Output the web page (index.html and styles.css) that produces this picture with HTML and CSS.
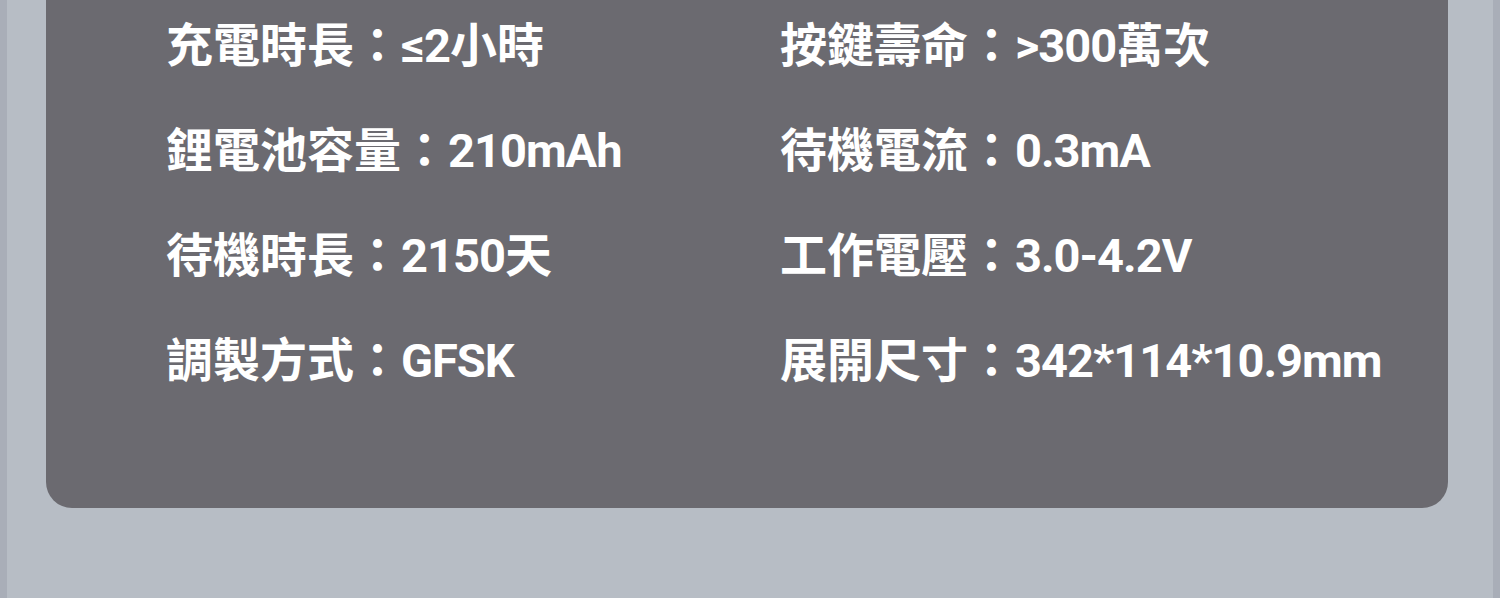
FILE: index.html
```html
<!DOCTYPE html>
<html lang="zh-Hant">
<head>
<meta charset="utf-8">
<link rel="stylesheet" href="styles.css">
</head>
<body>
<div class="page">
  <div class="card">
    <div class="specs">
      <div class="item">充電時長：<span class="val">≤2</span>小時</div>
      <div class="item">按鍵壽命：<span class="val">&gt;300</span>萬次</div>
      <div class="item">鋰電池容量：<span class="val">210mAh</span></div>
      <div class="item">待機電流：<span class="val">0.3mA</span></div>
      <div class="item">待機時長：<span class="val">2150</span>天</div>
      <div class="item">工作電壓：<span class="val">3.0-4.2V</span></div>
      <div class="item">調製方式：<span class="val">GFSK</span></div>
      <div class="item">展開尺寸：<span class="val">342*114*10.9mm</span></div>
    </div>
  </div>
</div>
</body>
</html>
```
FILE: styles.css
```css
html, body {
  margin: 0;
  padding: 0;
}
body {
  width: 1500px;
  height: 598px;
  overflow: hidden;
  background: #b7bdc5;
}
.page {
  box-sizing: border-box;
  height: 598px;
  padding: 0 45px 0 39px;
  border-left: 7px solid #a9aeb8;
  border-right: 7px solid #a9aeb8;
  background: #b7bdc5;
}
.card {
  box-sizing: border-box;
  height: 508px;
  background: #6b6a70;
  border-radius: 0 0 26px 26px;
  padding: 16px 0 0 120px;
}
.specs {
  display: grid;
  grid-template-columns: 614px 1fr;
  row-gap: 45px;
}
.item {
  font-family: Roboto, "Noto Sans CJK TC", "Noto Sans CJK SC", sans-serif;
  font-weight: 700;
  font-size: 47px;
  line-height: 60px;
  color: #ffffff;
  white-space: nowrap;
}
.val {
  letter-spacing: -1px;
}
```
